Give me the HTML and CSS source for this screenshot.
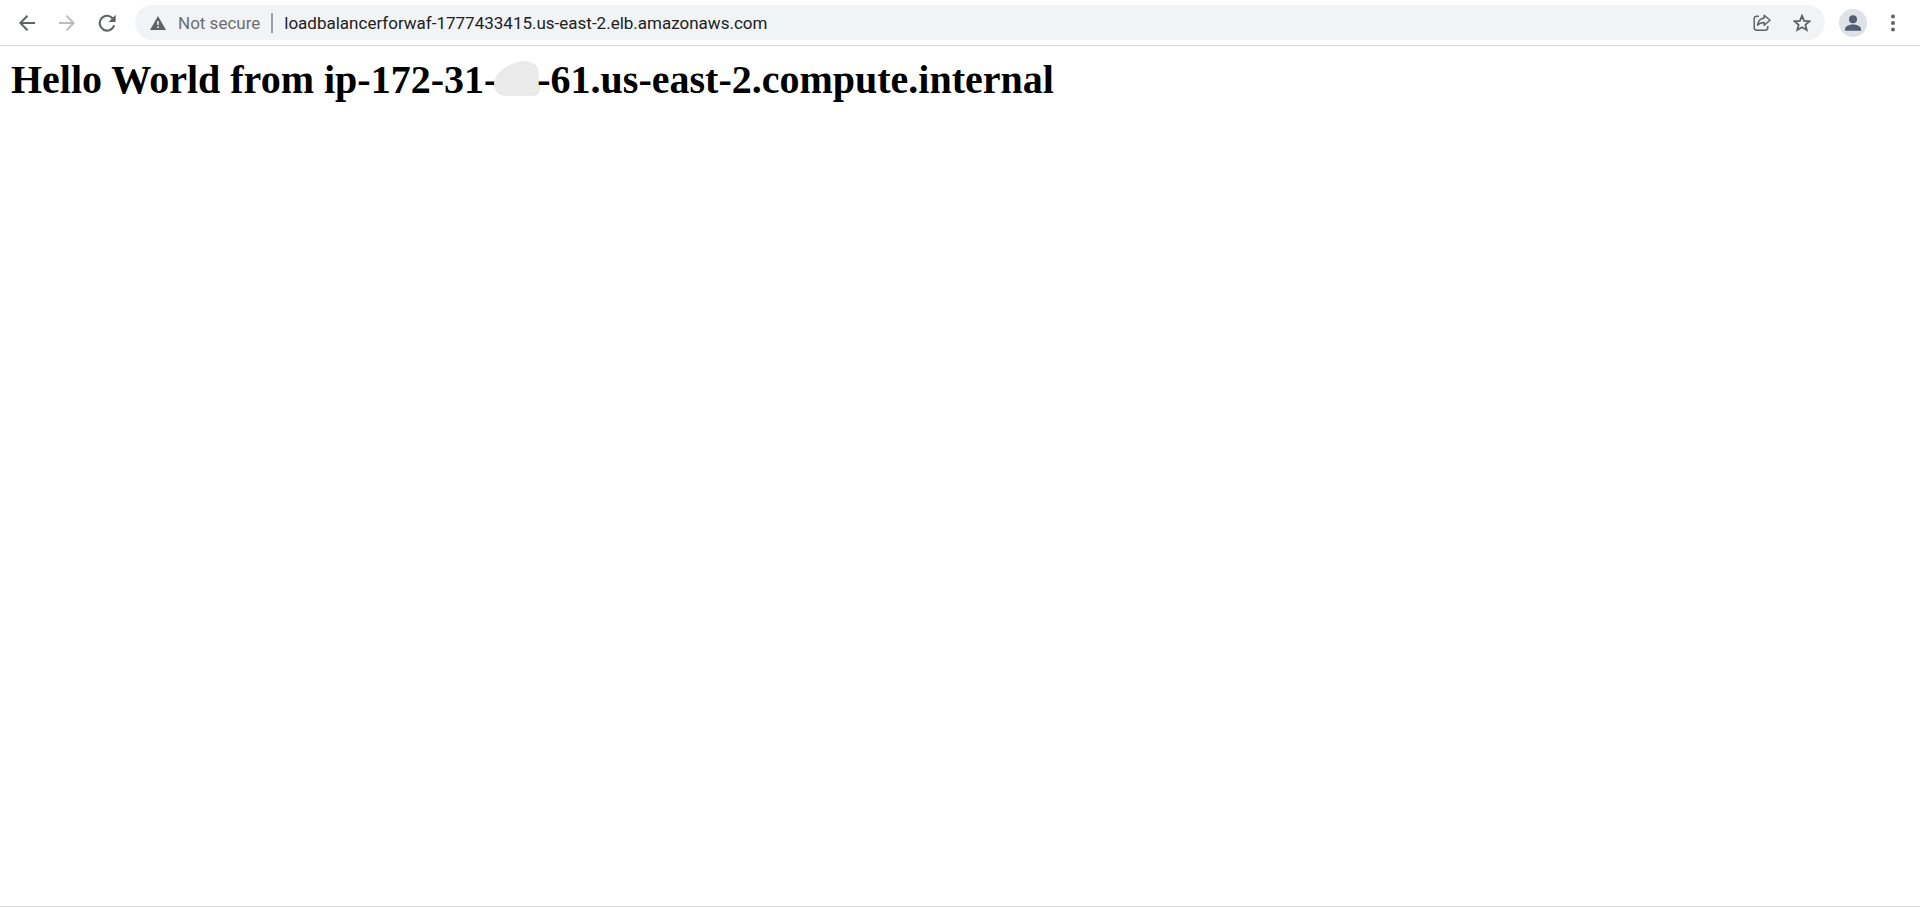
FILE: index.html
```html
<!DOCTYPE html>
<html lang="en">
<head>
<meta charset="utf-8">
<title>loadbalancerforwaf-1777433415.us-east-2.elb.amazonaws.com</title>
<link rel="stylesheet" href="styles.css">
</head>
<body>
<header class="toolbar">
  <nav class="nav">
    <button class="icon-button" type="button" aria-label="Back">
      <svg width="16" height="16" viewBox="0 0 16 16" fill="none" stroke="#5f6368" stroke-width="2"><path d="M16 8H1.5M8.5 .8L1.3 8l7.2 7.2"/></svg>
    </button>
    <button class="icon-button" type="button" aria-label="Forward" disabled>
      <svg width="16" height="16" viewBox="0 0 16 16" fill="none" stroke="#babcbe" stroke-width="2"><path d="M0 8h14.5M7.5 .8L14.7 8l-7.2 7.2"/></svg>
    </button>
    <button class="icon-button" type="button" aria-label="Reload">
      <svg width="18" height="18" viewBox="0 0 18 18"><path d="M16.2 11.3A7.4 7.4 0 1 1 14.6 4.2" fill="none" stroke="#5f6368" stroke-width="2.1"/><path d="M17.6 .8v7.1h-7.1z" fill="#5f6368"/></svg>
    </button>
  </nav>
  <form class="omnibox">
    <button class="security" type="button">
      <svg width="16" height="14" viewBox="0 0 16 14"><path d="M8 0l8 14H0z" fill="#5f6368"/><path d="M7.2 5h1.6v4H7.2zM7.2 10.3h1.6v1.6H7.2z" fill="#f1f3f4"/></svg>
      <span>Not secure</span>
    </button>
    <span class="divider"></span>
    <input class="address" type="text" aria-label="Address" spellcheck="false" value="loadbalancerforwaf-1777433415.us-east-2.elb.amazonaws.com">
    <button class="icon-button" type="button" aria-label="Share this page">
      <svg width="18" height="18" viewBox="0 0 18 18" fill="none" stroke="#5f6368" stroke-width="1.5" stroke-linejoin="round"><path d="M6 2.2H3.8Q1.2 2.2 1.2 4.8v8.8Q1.2 16.2 3.8 16.2h8.4q2.6 0 2.6-2.6V12"/><path d="M11.2 1.2l5.8 5-5.8 5V8.4C8.200 8.300 6.300 9.200 4.500 11.300 5 7.300 7.200 4.500 11.200 4z"/></svg>
    </button>
    <button class="icon-button" type="button" aria-label="Bookmark this tab">
      <svg width="18" height="18" viewBox="0 0 18 18" fill="none" stroke="#5f6368" stroke-width="1.8"><path d="M9 1.800l2.100 5 5.400.5-4.100 3.500 1.300 5.200L9 13.300l-4.700 2.700 1.300-5.200-4.100-3.500 5.400-.5z"/></svg>
    </button>
  </form>
  <div class="tools">
    <button class="icon-button" type="button" aria-label="Profile">
      <svg width="28" height="28" viewBox="0 0 28 28"><circle cx="14" cy="14" r="14" fill="#dee1e6"/><circle cx="14" cy="10.300" r="4" fill="#525f73"/><path d="M6 21.800v-1.600c0-2.900 4.500-4.600 8-4.600s8 1.700 8 4.600v1.600z" fill="#525f73"/></svg>
    </button>
    <button class="icon-button" type="button" aria-label="Menu">
      <svg width="4" height="18" viewBox="0 0 4 18" fill="#5f6368"><circle cx="2" cy="2.500" r="2"/><circle cx="2" cy="9" r="2"/><circle cx="2" cy="15.500" r="2"/></svg>
    </button>
  </div>
</header>
<main class="page">
  <h1 class="message">Hello World from ip-172-31-<svg class="redaction" width="40" height="36" viewBox="0 0 40 36" role="img" aria-label="hidden"><path d="M-3 22C-2 10 14 1 26 0c10-.5 16 5 16 12 0 3-1 5 0 8 1 3 2 6 1 9-1 4-4 6-9 6H10C2 35-3 31-3 22z" fill="#eaeaea"/></svg>-61.us-east-2.compute.internal</h1>
</main>
</body>
</html>
```
FILE: styles.css
```css
* {
  box-sizing: border-box;
}

body {
  display: flex;
  flex-direction: column;
  min-height: 100vh;
  margin: 0;
  background: #fff;
}

.toolbar {
  display: flex;
  align-items: center;
  padding: 5px 7px;
  border-bottom: 1px solid #d9dadc;
}

.nav,
.tools {
  display: flex;
  align-items: center;
}

.icon-button {
  display: flex;
  flex: none;
  align-items: center;
  justify-content: center;
  width: 40px;
  height: 34px;
  padding: 0;
  border: 0;
  background: none;
}

.omnibox {
  display: flex;
  flex: 1;
  align-items: center;
  height: 35px;
  margin: 0 8px;
  padding: 0 3px 0 15px;
  border-radius: 18px;
  background: #f1f3f4;
  font-family: "Segoe UI", Roboto, sans-serif;
  font-size: 17px;
}

.security {
  display: flex;
  align-items: center;
  gap: 12px;
  padding: 0;
  border: 0;
  background: none;
  color: #6a6e72;
  font: inherit;
}

.divider {
  width: 2px;
  height: 20px;
  margin: 0 11px;
  background: #9b9da0;
}

.address {
  flex: 1;
  min-width: 0;
  padding: 0;
  border: 0;
  outline: 0;
  background: none;
  color: #202124;
  font: inherit;
}

.page {
  flex: 1;
  margin-bottom: 1px;
  padding: 11px;
  border-bottom: 1px solid #d9dadc;
}

.message {
  margin: 0;
  color: #000;
  font: bold 40px/46px "Liberation Serif", "Times New Roman", serif;
}

.redaction {
  overflow: visible;
  vertical-align: -4px;
}
```
